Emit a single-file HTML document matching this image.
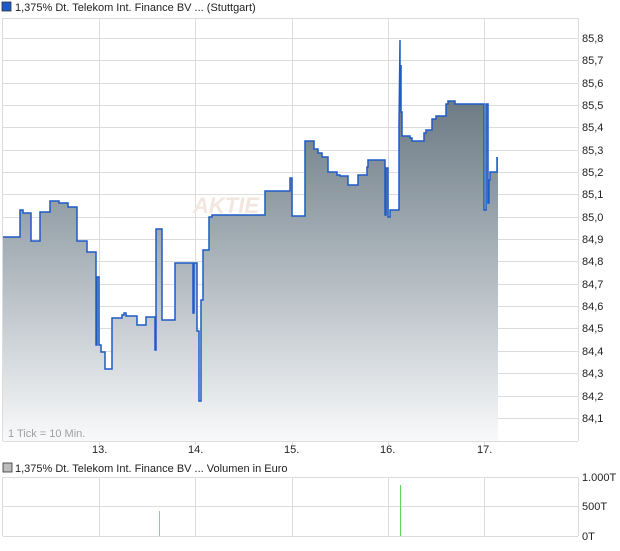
<!DOCTYPE html>
<html><head><meta charset="utf-8"><style>
body{margin:0;background:#fff;width:620px;height:546px;overflow:hidden;font-family:"Liberation Sans",sans-serif}
svg text{font-family:"Liberation Sans",sans-serif;font-size:11px;fill:#222}
</style></head><body>
<svg width="620" height="546" xmlns="http://www.w3.org/2000/svg">
<defs>
<linearGradient id="g" x1="0" y1="40" x2="0" y2="440" gradientUnits="userSpaceOnUse">
<stop offset="0" stop-color="#56656f"/>
<stop offset="0.45" stop-color="#9aa5ad"/>
<stop offset="1" stop-color="#f8f9fa"/>
</linearGradient>
</defs>
<rect x="2" y="2" width="9" height="9" fill="#1f5bc6" stroke="#333" stroke-width="0.8"/>
<text x="15" y="11">1,375% Dt. Telekom Int. Finance BV ... (Stuttgart)</text>
<g stroke="#dcdcdc" stroke-width="1">
<line x1="3" y1="18.5" x2="578" y2="18.5"/>
<line x1="3" y1="38.5" x2="578" y2="38.5"/>
<line x1="3" y1="60.5" x2="578" y2="60.5"/>
<line x1="3" y1="83.5" x2="578" y2="83.5"/>
<line x1="3" y1="105.5" x2="578" y2="105.5"/>
<line x1="3" y1="127.5" x2="578" y2="127.5"/>
<line x1="3" y1="150.5" x2="578" y2="150.5"/>
<line x1="3" y1="172.5" x2="578" y2="172.5"/>
<line x1="3" y1="194.5" x2="578" y2="194.5"/>
<line x1="3" y1="217.5" x2="578" y2="217.5"/>
<line x1="3" y1="239.5" x2="578" y2="239.5"/>
<line x1="3" y1="261.5" x2="578" y2="261.5"/>
<line x1="3" y1="284.5" x2="578" y2="284.5"/>
<line x1="3" y1="306.5" x2="578" y2="306.5"/>
<line x1="3" y1="328.5" x2="578" y2="328.5"/>
<line x1="3" y1="351.5" x2="578" y2="351.5"/>
<line x1="3" y1="373.5" x2="578" y2="373.5"/>
<line x1="3" y1="396.5" x2="578" y2="396.5"/>
<line x1="3" y1="418.5" x2="578" y2="418.5"/>
<line x1="3" y1="441.5" x2="578" y2="441.5"/>
<line x1="2.5" y1="18" x2="2.5" y2="441"/>
<line x1="578.5" y1="18" x2="578.5" y2="441"/>
<line x1="99.5" y1="18" x2="99.5" y2="445"/>
<line x1="195.5" y1="18" x2="195.5" y2="445"/>
<line x1="292.5" y1="18" x2="292.5" y2="445"/>
<line x1="388.5" y1="18" x2="388.5" y2="445"/>
<line x1="484.5" y1="18" x2="484.5" y2="445"/>
</g>
<path fill="url(#g)" stroke="none" d="M3,237 H20 V210 H23 V213 H31 V241 H40 V212 H50 V201 H59 V203 H68 V207 H77 V241 H87 V252 H96 V345 L97,345 V277 H99 V345 H101 V352 H105 V369 H112 V318 H122 V315 H124 V313 H126 V316 H137 V325 H146 V317 H155 V350 H156 V229 H162 V320 H175 V263 H193 V313 H194 V263 H197 V331 H199 V401 H201 V300 H203 V250 H209 V217 H212 V215 H265 V191 H290 V178 H292 V216 H305 V141 H314 V149 H318 V153 H322 V157 H328 V172 H337 V175 H340 V176 H348 V185 H358 V175 H367 V167 H368 V160 H385 V215 H386 V168 H388 V217 H390 V210 H399 V125 L400,40 V108 L401,65 V112 H402 V136 H410 V138 H412 V141 H424 V133 H426 V130 H432 V119 H436 V116 H446 V104 H448 V101 H455 V104 H484 V210 H486 V104 H488 V203 H489 V180 H490 V172 H497 V157 H498 V441 H3 Z"/>
<path fill="none" stroke="#1f5bc6" stroke-width="1.5" d="M3,237 H20 V210 H23 V213 H31 V241 H40 V212 H50 V201 H59 V203 H68 V207 H77 V241 H87 V252 H96 V345 L97,345 V277 H99 V345 H101 V352 H105 V369 H112 V318 H122 V315 H124 V313 H126 V316 H137 V325 H146 V317 H155 V350 H156 V229 H162 V320 H175 V263 H193 V313 H194 V263 H197 V331 H199 V401 H201 V300 H203 V250 H209 V217 H212 V215 H265 V191 H290 V178 H292 V216 H305 V141 H314 V149 H318 V153 H322 V157 H328 V172 H337 V175 H340 V176 H348 V185 H358 V175 H367 V167 H368 V160 H385 V215 H386 V168 H388 V217 H390 V210 H399 V125 L400,40 V108 L401,65 V112 H402 V136 H410 V138 H412 V141 H424 V133 H426 V130 H432 V119 H436 V116 H446 V104 H448 V101 H455 V104 H484 V210 H486 V104 H488 V203 H489 V180 H490 V172 H497 V157"/>
<text x="193" y="213" style="font-size:22px;font-style:italic;font-weight:bold;fill:#f2e6df">AKTIE</text>
<text x="8" y="437" style="fill:#a0a0a0">1 Tick = 10 Min.</text>
<g>
<text x="582" y="42">85,8</text><text x="582" y="64">85,7</text><text x="582" y="87">85,6</text><text x="582" y="109">85,5</text><text x="582" y="131">85,4</text><text x="582" y="154">85,3</text><text x="582" y="176">85,2</text><text x="582" y="198">85,1</text><text x="582" y="221">85,0</text><text x="582" y="243">84,9</text><text x="582" y="265">84,8</text><text x="582" y="288">84,7</text><text x="582" y="310">84,6</text><text x="582" y="332">84,5</text><text x="582" y="355">84,4</text><text x="582" y="377">84,3</text><text x="582" y="400">84,2</text><text x="582" y="422">84,1</text>
</g>
<text x="92" y="453">13.</text><text x="188" y="453">14.</text><text x="284" y="453">15.</text><text x="380" y="453">16.</text><text x="477" y="453">17.</text>
<rect x="3" y="463" width="9" height="9" fill="#bbb" stroke="#333" stroke-width="0.8"/>
<text x="15" y="472">1,375% Dt. Telekom Int. Finance BV ... Volumen in Euro</text>
<g stroke="#dcdcdc" stroke-width="1">
<line x1="3" y1="477.5" x2="578" y2="477.5"/>
<line x1="3" y1="506.5" x2="578" y2="506.5"/>
<line x1="3" y1="536.5" x2="578" y2="536.5"/>
<line x1="2.5" y1="477" x2="2.5" y2="536"/>
<line x1="578.5" y1="477" x2="578.5" y2="536"/>
<line x1="99.5" y1="477" x2="99.5" y2="536"/>
<line x1="195.5" y1="477" x2="195.5" y2="536"/>
<line x1="292.5" y1="477" x2="292.5" y2="536"/>
<line x1="388.5" y1="477" x2="388.5" y2="536"/>
<line x1="484.5" y1="477" x2="484.5" y2="536"/>
</g>
<line x1="159.5" y1="511" x2="159.5" y2="536" stroke="#7ed87e" stroke-width="1"/>
<line x1="400.5" y1="485" x2="400.5" y2="536" stroke="#5cd65c" stroke-width="1"/>
<text x="582" y="481">1.000T</text><text x="582" y="510">500T</text><text x="582" y="540">0T</text>
</svg>
</body></html>
